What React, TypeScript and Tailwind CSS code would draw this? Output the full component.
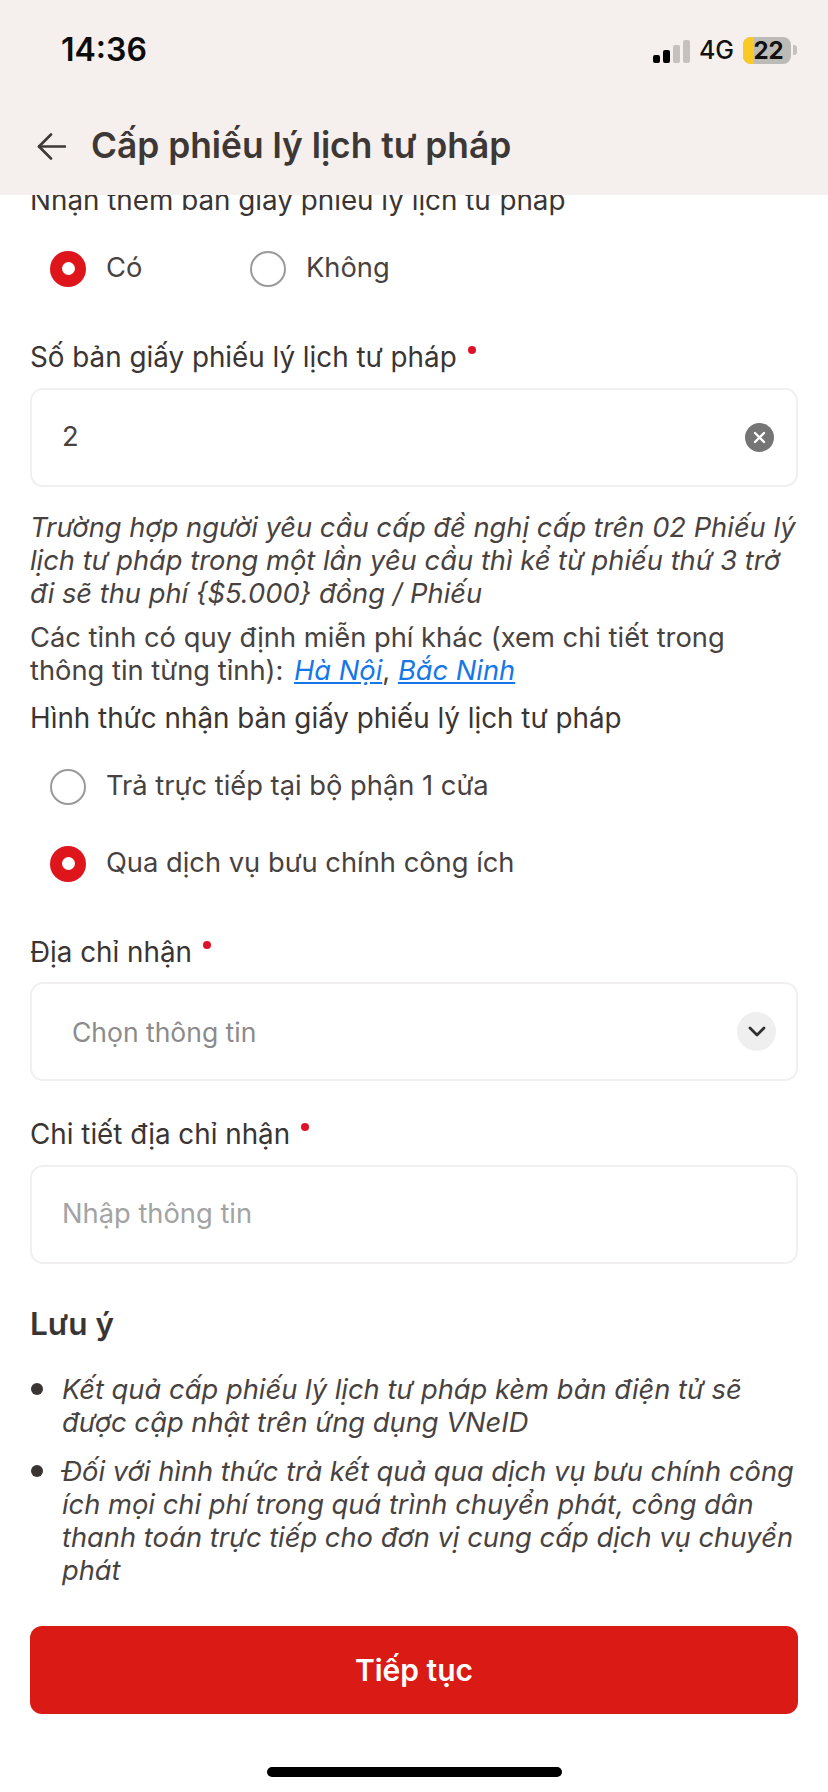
const Radio = ({ checked, label }: { checked?: boolean; label: string }) => (
  <div className="flex items-center gap-[20px] h-[35px]">
    {checked ? (
      <div className="w-[36px] h-[36px] rounded-full bg-[#df151c] flex items-center justify-center">
        <div className="w-[13px] h-[13px] rounded-full bg-white" />
      </div>
    ) : (
      <div className="w-[36px] h-[36px] rounded-full border-2 border-[#9a9a9a] bg-white" />
    )}
    <span className="text-[27.3px] leading-[34px] mb-[2px] text-[#48423f] whitespace-nowrap">{label}</span>
  </div>
);

const FieldLabel = ({ children, required }: { children: string; required?: boolean }) => (
  <div className="flex h-[34px] items-center text-[27.8px] leading-[34px] text-[#3a3532] whitespace-nowrap">
    {children}
    {required && <span className="ml-[11px] mb-[15px] w-[8px] h-[8px] rounded-full bg-[#e0122a]" />}
  </div>
);

export default function App() {
  return (
    <div className="w-[828px] h-[1792px] bg-white overflow-hidden font-['Inter',sans-serif]">
      {/* Header */}
      <div className="relative z-10 h-[195px] bg-[#f5f0ed] pt-[30px]">
        <div className="flex items-center justify-between h-[40px] pl-[61px] pr-[31px]">
          <span className="text-[32px] font-semibold text-[#0c0c0c] leading-[40px]">14:36</span>
          <div className="flex items-center">
            <div className="flex items-end gap-[3.5px] h-[24px] mt-[1px]">
              <div className="w-[6.5px] h-[8px] rounded-[2px] bg-black" />
              <div className="w-[6.5px] h-[13px] rounded-[2px] bg-black" />
              <div className="w-[6.5px] h-[18px] rounded-[2px] bg-[#c4c1be]" />
              <div className="w-[6.5px] h-[23px] rounded-[2px] bg-[#c4c1be]" />
            </div>
            <span className="ml-[9px] text-[25px] font-medium text-[#111] leading-[30px]">4G</span>
            <div className="relative ml-[9px] w-[48px] h-[27px] rounded-[8px] bg-[#bdbbb8] overflow-hidden flex items-center justify-center">
              <div className="absolute left-0 top-0 bottom-0 w-[11px] bg-[#fbc926]" />
              <span className="relative text-[24px] font-bold text-[#111] leading-[27px] ml-[3px]">22</span>
            </div>
            <div className="ml-[2px] w-[4px] h-[10px] rounded-r-[3px] bg-[#c4c1be]" />
          </div>
        </div>
        <div className="flex items-center h-[40px] mt-[56px] pl-[37px]">
          <svg width="29" height="27" viewBox="0 0 29 27" fill="none" stroke="#3d3835" strokeWidth="2.6" strokeLinecap="round" strokeLinejoin="round">
            <path d="M28 13.5H2" />
            <path d="M14 1.5 2 13.5l12 12" />
          </svg>
          <span className="ml-[25px] text-[35.3px] font-semibold text-[#3d3835] leading-[40px] whitespace-nowrap">Cấp phiếu lý lịch tư pháp</span>
        </div>
      </div>

      {/* Form */}
      <div className="-mt-[12px] px-[30px]">
        <FieldLabel>Nhận thêm bản giấy phiếu lý lịch tư pháp</FieldLabel>
        <div className="flex mt-[34px] pl-[20px]">
          <div className="w-[200px]"><Radio checked label="Có" /></div>
          <Radio label="Không" />
        </div>

        <div className="mt-[54px]"><FieldLabel required>Số bản giấy phiếu lý lịch tư pháp</FieldLabel></div>
        <div className="mt-[14px] h-[99px] rounded-[13px] border-2 border-[#f1f0ef] flex items-center justify-between pl-[30px] pr-[22px]">
          <span className="text-[27.3px] text-[#48423f]">2</span>
          <div className="w-[29px] h-[29px] rounded-full bg-[#757575] flex items-center justify-center">
            <svg width="13" height="13" viewBox="0 0 13 13" fill="none" stroke="#fff" strokeWidth="2.4" strokeLinecap="round">
              <path d="M2 2l9 9M11 2l-9 9" />
            </svg>
          </div>
        </div>

        <p className="mt-[24px] text-[27.3px] leading-[33px] italic text-[#48423f] whitespace-nowrap">
          Trường hợp người yêu cầu cấp đề nghị cấp trên 02 Phiếu lý<br />
          lịch tư pháp trong một lần yêu cầu thì kể từ phiếu thứ 3 trở<br />
          đi sẽ thu phí {"{$5.000}"} đồng / Phiếu
        </p>
        <p className="mt-[11px] text-[27.3px] leading-[33px] text-[#48423f] whitespace-nowrap">
          Các tỉnh có quy định miễn phí khác (xem chi tiết trong<br />
          thông tin từng tỉnh): <a className="ml-[3px] italic underline text-[#1677e8]">Hà Nội</a>, <a className="italic underline text-[#1677e8]">Bắc Ninh</a>
        </p>

        <div className="mt-[14px]"><FieldLabel>Hình thức nhận bản giấy phiếu lý lịch tư pháp</FieldLabel></div>
        <div className="mt-[34px] pl-[20px]"><Radio label="Trả trực tiếp tại bộ phận 1 cửa" /></div>
        <div className="mt-[42px] pl-[20px]"><Radio checked label="Qua dịch vụ bưu chính công ích" /></div>

        <div className="mt-[54px]"><FieldLabel required>Địa chỉ nhận</FieldLabel></div>
        <div className="mt-[13px] h-[99px] rounded-[13px] border-2 border-[#f1f0ef] flex items-center justify-between pl-[40px] pr-[20px]">
          <span className="pt-[2px] text-[26.5px] text-[#8b8b8b]">Chọn thông tin</span>
          <div className="w-[39px] h-[39px] rounded-full bg-[#efefef] flex items-center justify-center">
            <svg width="20" height="13" viewBox="0 0 20 13" fill="none" stroke="#2f2f2f" strokeWidth="2.8" strokeLinecap="round" strokeLinejoin="round">
              <path d="M3 3l7 7 7-7" />
            </svg>
          </div>
        </div>

        <div className="mt-[36px]"><FieldLabel required>Chi tiết địa chỉ nhận</FieldLabel></div>
        <div className="mt-[14px] h-[99px] rounded-[13px] border-2 border-[#f1f0ef] flex items-center pl-[30px]">
          <span className="text-[27.3px] text-[#a3a3a3]">Nhập thông tin</span>
        </div>

        <div className="mt-[43px] h-[34px] text-[31.5px] leading-[34px] font-semibold text-[#3a3532]">Lưu ý</div>

        <div className="mt-[32px] flex flex-col gap-[16px]">
          <div className="flex">
            <div className="mt-[10px] ml-[1px] w-[12px] h-[12px] rounded-full bg-[#3a3532]" />
            <p className="ml-[19px] text-[27.3px] leading-[33px] italic text-[#48423f] whitespace-nowrap">
              Kết quả cấp phiếu lý lịch tư pháp kèm bản điện tử sẽ<br />
              được cập nhật trên ứng dụng VNeID
            </p>
          </div>
          <div className="flex">
            <div className="mt-[10px] ml-[1px] w-[12px] h-[12px] rounded-full bg-[#3a3532]" />
            <p className="ml-[19px] text-[27.3px] leading-[33px] italic text-[#48423f] whitespace-nowrap">
              Đối với hình thức trả kết quả qua dịch vụ bưu chính công<br />
              ích mọi chi phí trong quá trình chuyển phát, công dân<br />
              thanh toán trực tiếp cho đơn vị cung cấp dịch vụ chuyển<br />
              phát
            </p>
          </div>
        </div>

        <button className="mt-[39px] w-full h-[88px] rounded-[12px] bg-[#da1a14] text-white text-[30px] font-semibold">Tiếp tục</button>
      </div>

      <div className="mt-[53px] mx-auto w-[295px] h-[10px] rounded-full bg-black" />
    </div>
  );
}
